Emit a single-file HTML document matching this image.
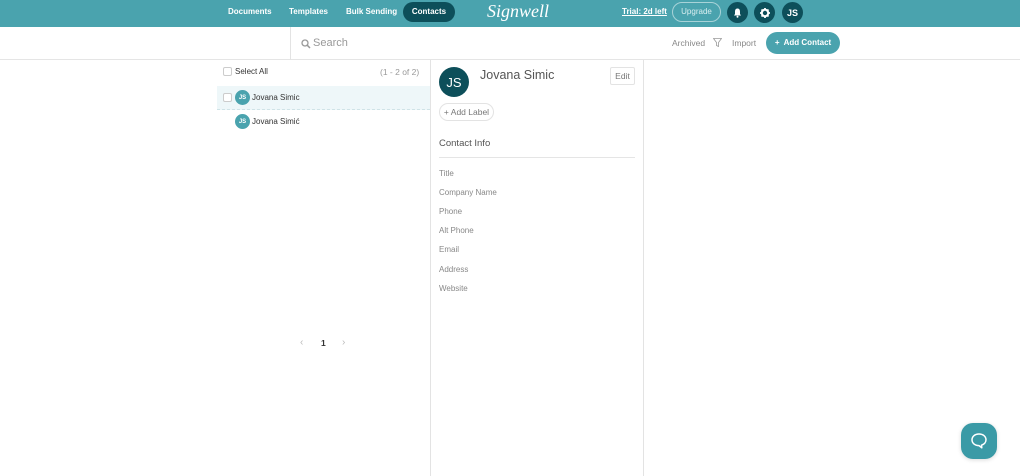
<!DOCTYPE html>
<html><head><meta charset="utf-8"><style>
*{box-sizing:border-box;margin:0;padding:0}
body{width:1020px;height:476px;overflow:hidden;background:#fff;font-family:"Liberation Sans",sans-serif;position:relative;color:#333}
.top{position:absolute;left:0;top:0;width:1020px;height:27px;background:#4aa3ae}
.nav{position:absolute;top:0;height:24px;line-height:24px;color:#fff;font-size:8px;font-weight:bold}
.pill{position:absolute;background:#0d4f5a;border-radius:12px;color:#fff;font-size:8px;font-weight:bold;text-align:center}
.circ{position:absolute;top:2px;width:21px;height:21px;border-radius:50%;background:#0d4f5a;color:#fff;font-size:9px;font-weight:bold;display:flex;align-items:center;justify-content:center}
.bar{position:absolute;top:27px;left:0;width:1020px;height:33px;border-bottom:1px solid #e5e5e5}
.vl{position:absolute;background:#e3e3e3;width:1px}
.small{font-size:8px;color:#333;line-height:10px}
.av{position:absolute;width:15px;height:15px;border-radius:50%;background:#4aa3ae;color:#fff;font-size:6px;font-weight:bold;display:flex;align-items:center;justify-content:center}
.cb{position:absolute;width:9px;height:9px;border:1px solid #ccc;border-radius:2px;background:#fff}
.lbl{position:absolute;left:439px;font-size:8px;color:#888;line-height:10px}
</style></head><body>
<div class="top"></div>
<div class="nav" style="left:228px">Documents</div>
<div class="nav" style="left:289px">Templates</div>
<div class="nav" style="left:346px">Bulk Sending</div>
<div class="pill" style="left:403px;top:2px;width:52px;height:20px;line-height:20px">Contacts</div>
<div style="position:absolute;left:487px;top:1px;color:#fff;font-family:'Liberation Serif',serif;font-style:italic;font-size:18px">Signwell</div>
<div class="nav" style="left:622px;text-decoration:underline">Trial: 2d left</div>
<div style="position:absolute;left:672px;top:2px;width:49px;height:20px;border:1px solid #a8d3d8;border-radius:11px;color:#d9eef0;font-size:8px;text-align:center;line-height:18px">Upgrade</div>
<div class="circ" style="left:727px"><svg width="9" height="10" viewBox="0 0 9 10"><path d="M4.5 0.5C2.5 0.5 2 2 2 4v2L1 7.5h7L7 6V4C7 2 6.5 0.5 4.5 0.5z" fill="#fff"/><circle cx="4.5" cy="8.7" r="1" fill="#fff"/></svg></div>
<div class="circ" style="left:754px"><svg width="10" height="10" viewBox="0 0 10 10"><circle cx="5" cy="5" r="3.2" fill="none" stroke="#fff" stroke-width="2"/><g stroke="#fff" stroke-width="1.8"><path d="M5 0v2M5 8v2M0 5h2M8 5h2M1.5 1.5l1.4 1.4M7.1 7.1l1.4 1.4M1.5 8.5l1.4-1.4M7.1 2.9l1.4-1.4"/></g></svg></div>
<div class="circ" style="left:782px">JS</div>
<div class="bar"></div>
<div class="vl" style="left:290px;top:27px;height:33px"></div>
<svg style="position:absolute;left:301px;top:39px" width="10" height="10" viewBox="0 0 10 10"><circle cx="4" cy="4" r="3" fill="none" stroke="#999" stroke-width="1.3"/><path d="M6.2 6.2L9 9" stroke="#999" stroke-width="1.5"/></svg>
<div style="position:absolute;left:313px;top:36px;font-size:11px;color:#999;line-height:14px">Search</div>
<div style="position:absolute;left:672px;top:38px;font-size:8.5px;color:#888;line-height:10px">Archived</div>
<svg style="position:absolute;left:713px;top:38px" width="9" height="9" viewBox="0 0 9 9"><path d="M0.5 0.5h8L5.5 4.5v4l-2-1v-3z" fill="none" stroke="#999" stroke-width="0.8"/></svg>
<div style="position:absolute;left:732px;top:38px;font-size:8.5px;color:#888;line-height:10px">Import</div>
<div class="pill" style="left:766px;top:32px;width:74px;height:22px;line-height:22px;background:#4aa3ae;border-radius:11px">+&nbsp; Add Contact</div>
<div class="vl" style="left:430px;top:60px;height:416px"></div>
<div class="vl" style="left:643px;top:60px;height:416px"></div>
<div class="cb" style="left:223px;top:67px"></div>
<div class="small" style="position:absolute;left:235px;top:67px">Select All</div>
<div style="position:absolute;left:380px;top:67px;font-size:8.5px;color:#999;line-height:10px">(1 - 2 of 2)</div>
<div style="position:absolute;left:217px;top:86px;width:213px;height:24px;background:#eef7f9;border-bottom:1px dashed #cfe3e7"></div>
<div class="cb" style="left:223px;top:93px"></div>
<div class="av" style="left:235px;top:90px">JS</div>
<div class="small" style="position:absolute;left:252px;top:93px">Jovana Simic</div>
<div class="av" style="left:235px;top:114px">JS</div>
<div class="small" style="position:absolute;left:252px;top:117px">Jovana Simić</div>
<div style="position:absolute;left:300px;top:337px;font-size:10px;color:#bbb">‹</div>
<div style="position:absolute;left:321px;top:338px;font-size:8.5px;color:#333;font-weight:bold">1</div>
<div style="position:absolute;left:342px;top:337px;font-size:10px;color:#bbb">›</div>
<div style="position:absolute;left:439px;top:67px;width:30px;height:30px;border-radius:50%;background:#0d4f5a;color:#fff;font-size:13px;display:flex;align-items:center;justify-content:center">JS</div>
<div style="position:absolute;left:480px;top:68px;font-size:12.5px;color:#555;line-height:15px">Jovana Simic</div>
<div style="position:absolute;left:610px;top:67px;width:25px;height:18px;border:1px solid #e3e3e3;border-radius:2px;font-size:8.5px;color:#777;text-align:center;line-height:16px">Edit</div>
<div style="position:absolute;left:439px;top:103px;width:55px;height:18px;border:1px solid #e3e3e3;border-radius:9px;font-size:8.5px;color:#777;text-align:center;line-height:16px">+ Add Label</div>
<div style="position:absolute;left:439px;top:138px;font-size:9.5px;color:#555;line-height:12px">Contact Info</div>
<div style="position:absolute;left:439px;top:157px;width:196px;height:1px;background:#e5e5e5"></div>
<div class="lbl" style="top:169px">Title</div>
<div class="lbl" style="top:188px">Company Name</div>
<div class="lbl" style="top:207px">Phone</div>
<div class="lbl" style="top:226px">Alt Phone</div>
<div class="lbl" style="top:245px">Email</div>
<div class="lbl" style="top:265px">Address</div>
<div class="lbl" style="top:284px">Website</div>
<div style="position:absolute;left:961px;top:423px;width:36px;height:36px;border-radius:12px;background:#3a9aa6;box-shadow:0 1px 4px rgba(0,0,0,.15)"><svg width="36" height="36" viewBox="0 0 36 36"><path d="M18 11c-4.2 0-7 2.5-7 5.8 0 3.3 2.8 5.8 7 5.8l2.8 2.2-0.3-2.6c2.7-0.8 4.5-3 4.5-5.4 0-3.3-2.8-5.8-7-5.8z" fill="none" stroke="#fff" stroke-width="1.5" stroke-linejoin="round"/></svg></div>
</body></html>
